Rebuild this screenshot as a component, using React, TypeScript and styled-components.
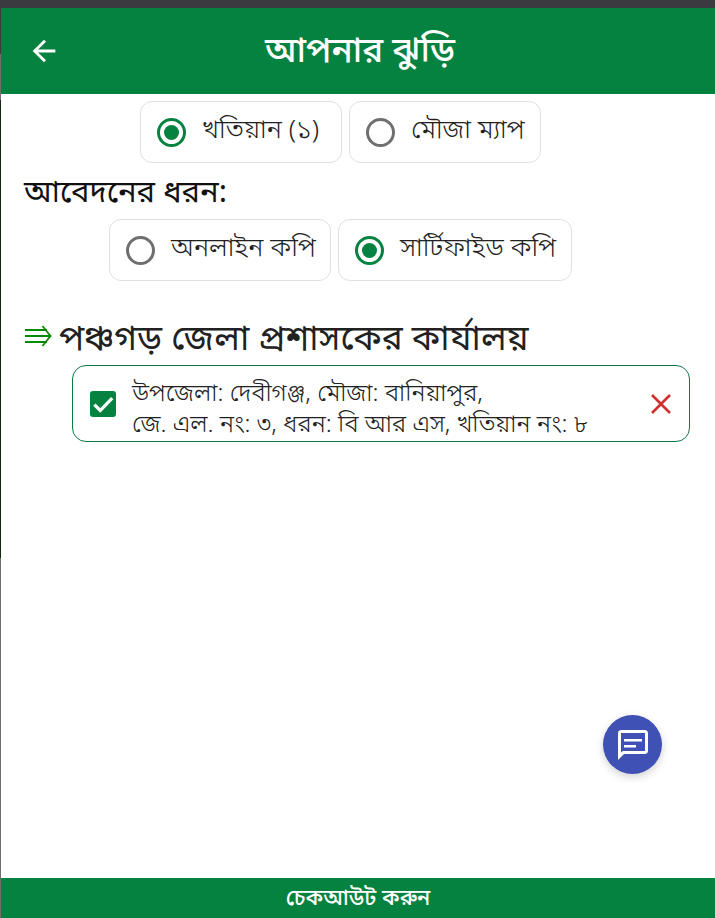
import React, { useState } from "react";
import styled, { createGlobalStyle } from "styled-components";

const GlobalStyle = createGlobalStyle`
  html, body {
    margin: 0;
    padding: 0;
    height: 100%;
    background: #3a3a40;
  }
  body {
    font-family: "Noto Sans", "Noto Sans Bengali", "Lohit Bengali", Roboto, sans-serif;
    color: #212121;
  }
`;

const Page = styled.div`
  height: 918px;
  box-sizing: border-box;
  padding: 8px 0 0 1px;
  overflow: hidden;
  background: linear-gradient(
    to bottom,
    #3a3a40 0,
    #3a3a40 54px,
    #6e6e6e 54px,
    #6e6e6e 100px,
    #14260f 100px,
    #14260f 558px,
    #6e6e6e 558px
  );
`;

const Shell = styled.div`
  position: relative;
  height: 910px;
  background: #fff;
  display: flex;
  flex-direction: column;
`;

const Header = styled.header`
  height: 86px;
  flex-shrink: 0;
  background: #058240;
  color: #fff;
  display: grid;
  grid-template-columns: 86px 1fr 82px;
  align-items: center;
`;

const BackButton = styled.button`
  border: 0;
  padding: 0;
  background: none;
  color: #fff;
  display: flex;
  justify-content: center;
`;

const Title = styled.h1`
  margin: 0 0 2px;
  font-size: 35px;
  font-weight: 500;
  text-align: center;
`;

const Content = styled.main`
  flex: 1;
  padding: 7px 25px 0 23px;
`;

const OptionRow = styled.div`
  display: flex;
  justify-content: center;
  gap: 7px;
  padding-right: 33px;
`;

const Option = styled.label<{ $width: number }>`
  width: ${(p) => p.$width}px;
  height: 62px;
  box-sizing: border-box;
  display: flex;
  align-items: center;
  gap: 16px;
  padding: 0 0 0 16px;
  border: 1px solid #e0e0e0;
  border-radius: 12px;
  font-size: 26.4px;
  font-weight: 350;
  white-space: nowrap;
  cursor: pointer;
`;

const RadioMark = styled.span<{ $on: boolean }>`
  width: 29px;
  height: 29px;
  box-sizing: border-box;
  flex-shrink: 0;
  border-radius: 50%;
  border: 3px solid ${(p) => (p.$on ? "#058240" : "#6f6f6f")};
  display: flex;
  align-items: center;
  justify-content: center;
  &::after {
    content: "";
    width: 15px;
    height: 15px;
    border-radius: 50%;
    background: ${(p) => (p.$on ? "#058240" : "transparent")};
  }
`;

const OptionText = styled.span`
  margin-top: -6px;
`;

const SectionLabel = styled.div`
  font-size: 31px;
  font-weight: 400;
  color: #111;
  line-height: 36px;
  margin: 9px 0 11px;
`;

const Office = styled.div`
  display: flex;
  align-items: center;
  gap: 5px;
  margin-top: 34px;
  font-size: 35.2px;
  font-weight: 400;
  line-height: 42px;
`;

const OfficeArrow = styled.span`
  display: flex;
  color: #058a05;
`;

const Card = styled.div`
  margin: 8px 0 0 48px;
  height: 77px;
  box-sizing: border-box;
  display: flex;
  align-items: center;
  border: 1px solid #0d7a45;
  border-radius: 14px;
  padding: 0 17px;
`;

const CheckBox = styled.span`
  width: 26px;
  height: 26px;
  flex-shrink: 0;
  border-radius: 3px;
  background: #058240;
  color: #fff;
  display: flex;
  align-items: center;
  justify-content: center;
`;

const CardText = styled.div`
  flex: 1;
  margin: 6px 0 0 16px;
  font-size: 24.4px;
  font-weight: 350;
  line-height: 31px;
`;

const RemoveButton = styled.button`
  border: 0;
  padding: 0;
  background: none;
  color: #d32f2f;
  display: flex;
`;

const Fab = styled.button`
  position: absolute;
  left: 602px;
  top: 707px;
  width: 59px;
  height: 59px;
  border: 0;
  padding: 0;
  border-radius: 50%;
  background: #3f51b5;
  color: #fff;
  display: flex;
  align-items: center;
  justify-content: center;
  box-shadow: 0 3px 8px rgba(0, 0, 0, 0.18);
`;

const Footer = styled.footer`
  height: 40px;
  flex-shrink: 0;
  background: #058240;
  color: #fff;
  font-size: 21.8px;
  font-weight: 500;
  display: flex;
  align-items: center;
  justify-content: center;
`;

export default function App() {
  const [kind, setKind] = useState("khatian");
  const [type, setType] = useState("certified");

  return (
    <>
      <GlobalStyle />
      <Page>
        <Shell>
          <Header>
            <BackButton aria-label="back">
              <svg width="34" height="34" viewBox="0 0 24 24" fill="currentColor">
                <path d="M20 11H7.83l5.59-5.59L12 4l-8 8 8 8 1.41-1.41L7.83 13H20v-2z" />
              </svg>
            </BackButton>
            <Title>আপনার ঝুড়ি</Title>
          </Header>
          <Content>
            <OptionRow>
              <Option $width={202} onClick={() => setKind("khatian")}>
                <RadioMark $on={kind === "khatian"} />
                <OptionText>খতিয়ান (১)</OptionText>
              </Option>
              <Option $width={192} onClick={() => setKind("map")}>
                <RadioMark $on={kind === "map"} />
                <OptionText>মৌজা ম্যাপ</OptionText>
              </Option>
            </OptionRow>
            <SectionLabel>আবেদনের ধরন:</SectionLabel>
            <OptionRow>
              <Option $width={222} onClick={() => setType("online")}>
                <RadioMark $on={type === "online"} />
                <OptionText>অনলাইন কপি</OptionText>
              </Option>
              <Option $width={234} onClick={() => setType("certified")}>
                <RadioMark $on={type === "certified"} />
                <OptionText>সার্টিফাইড কপি</OptionText>
              </Option>
            </OptionRow>
            <Office>
              <OfficeArrow>
                <svg width="30" height="22" viewBox="0 0 30 22" fill="none" stroke="currentColor" strokeWidth="1.8">
                  <path d="M1 5h22M1 11h25M1 17h22M18.5 1l8 10-8 10" />
                </svg>
              </OfficeArrow>
              পঞ্চগড় জেলা প্রশাসকের কার্যালয়
            </Office>
            <Card>
              <CheckBox>
                <svg width="26" height="26" viewBox="0 0 24 24" fill="none" stroke="currentColor" strokeWidth="3">
                  <path d="M4 12.5l5.5 5.5L20.5 6.5" />
                </svg>
              </CheckBox>
              <CardText>
                উপজেলা: দেবীগঞ্জ, মৌজা: বানিয়াপুর,
                <br />
                জে. এল. নং: ৩, ধরন: বি আর এস, খতিয়ান নং: ৮
              </CardText>
              <RemoveButton aria-label="remove">
                <svg width="22" height="22" viewBox="0 0 22 22" fill="none" stroke="currentColor" strokeWidth="2.6">
                  <path d="M2 2l18 18M20 2 2 20" />
                </svg>
              </RemoveButton>
            </Card>
          </Content>
          <Fab aria-label="chat">
            <svg width="36" height="36" viewBox="0 0 24 24" fill="currentColor">
              <path d="M20 2H4c-1.1 0-2 .9-2 2v18l4-4h14c1.1 0 2-.9 2-2V4c0-1.1-.9-2-2-2zm0 14H5.17L4 17.17V4h16v12z" />
              <path d="M6 8h12v1.6H6zM6 12h8v1.6H6z" />
            </svg>
          </Fab>
          <Footer>চেকআউট করুন</Footer>
        </Shell>
      </Page>
    </>
  );
}
